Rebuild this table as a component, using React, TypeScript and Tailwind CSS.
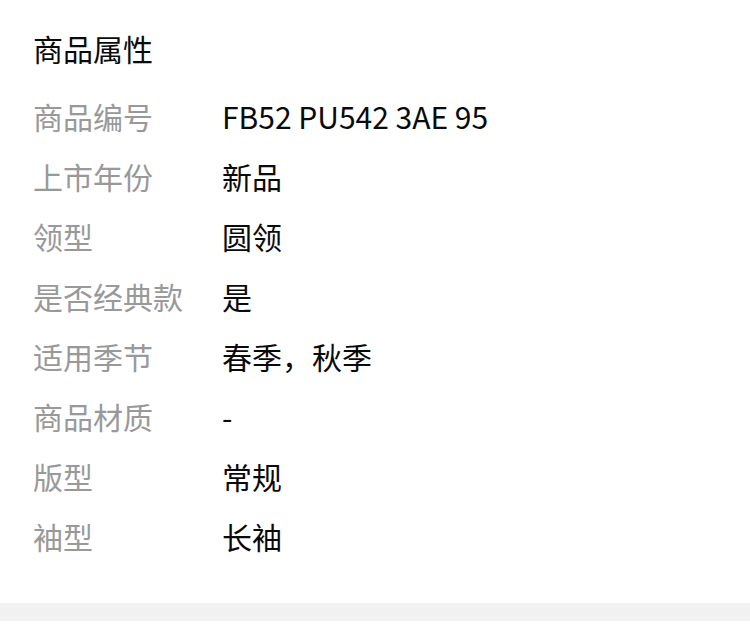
const rows: [string, string][] = [
  ['商品编号', 'FB52 PU542 3AE 95'],
  ['上市年份', '新品'],
  ['领型', '圆领'],
  ['是否经典款', '是'],
  ['适用季节', '春季，秋季'],
  ['商品材质', '-'],
  ['版型', '常规'],
  ['袖型', '长袖'],
];

export default function App() {
  return (
    <div
      className="w-[750px] h-[628px] bg-white"
      style={{ fontFamily: '"Noto Sans CJK SC", "Noto Sans", sans-serif' }}
    >
      <div className="pl-[33px] pt-[28px] pb-[37px]">
        <h2 className="h-[40px] leading-[40px] text-[30px] font-normal text-[#0a0a0a]">商品属性</h2>
        <div className="mt-[18px]">
          {rows.map(([k, v]) => (
            <div key={k} className="flex h-[60px] items-center text-[30px]">
              <span className="w-[189px] shrink-0 text-[#999]">{k}</span>
              <span className="text-[#0a0a0a]">{v}</span>
            </div>
          ))}
        </div>
      </div>
      <div className="h-[18px] bg-[#f1f1f1]" />
    </div>
  );
}
